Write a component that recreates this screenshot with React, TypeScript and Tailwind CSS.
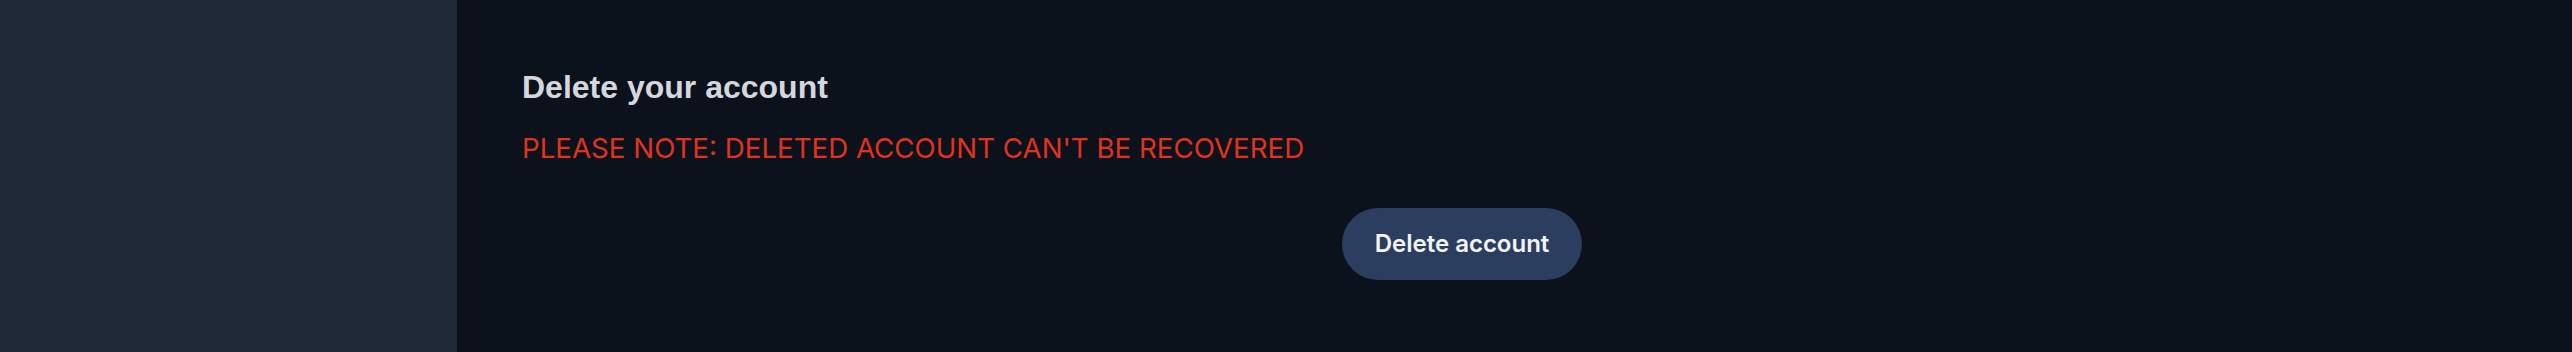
export default function App() {
  return (
    <div className="flex h-[352px] w-full bg-[#0b121b] font-['Inter',sans-serif]">
      {/* Sidebar */}
      <aside className="w-[457px] shrink-0 bg-[#1f2937]" />

      {/* Content */}
      <main className="flex-1 pl-[65px] pt-[68px]">
        <section className="flex w-[1060px] flex-col">
          <h2 className="font-['Liberation_Sans',Arial,sans-serif] text-[32px] font-bold leading-[38px] text-[#d4d7de]">
            Delete your account
          </h2>
          <p className="mt-[25px] text-[27.7px] leading-[34px] text-[#e0321f]">
            PLEASE NOTE: DELETED ACCOUNT CAN'T BE RECOVERED
          </p>
          <div className="mt-[43px] flex justify-end">
            <button className="h-[72px] w-[240px] rounded-full bg-[#2c3e5f] text-[24px] font-semibold text-[#f3f4f6]">
              Delete account
            </button>
          </div>
        </section>
      </main>
    </div>
  );
}
